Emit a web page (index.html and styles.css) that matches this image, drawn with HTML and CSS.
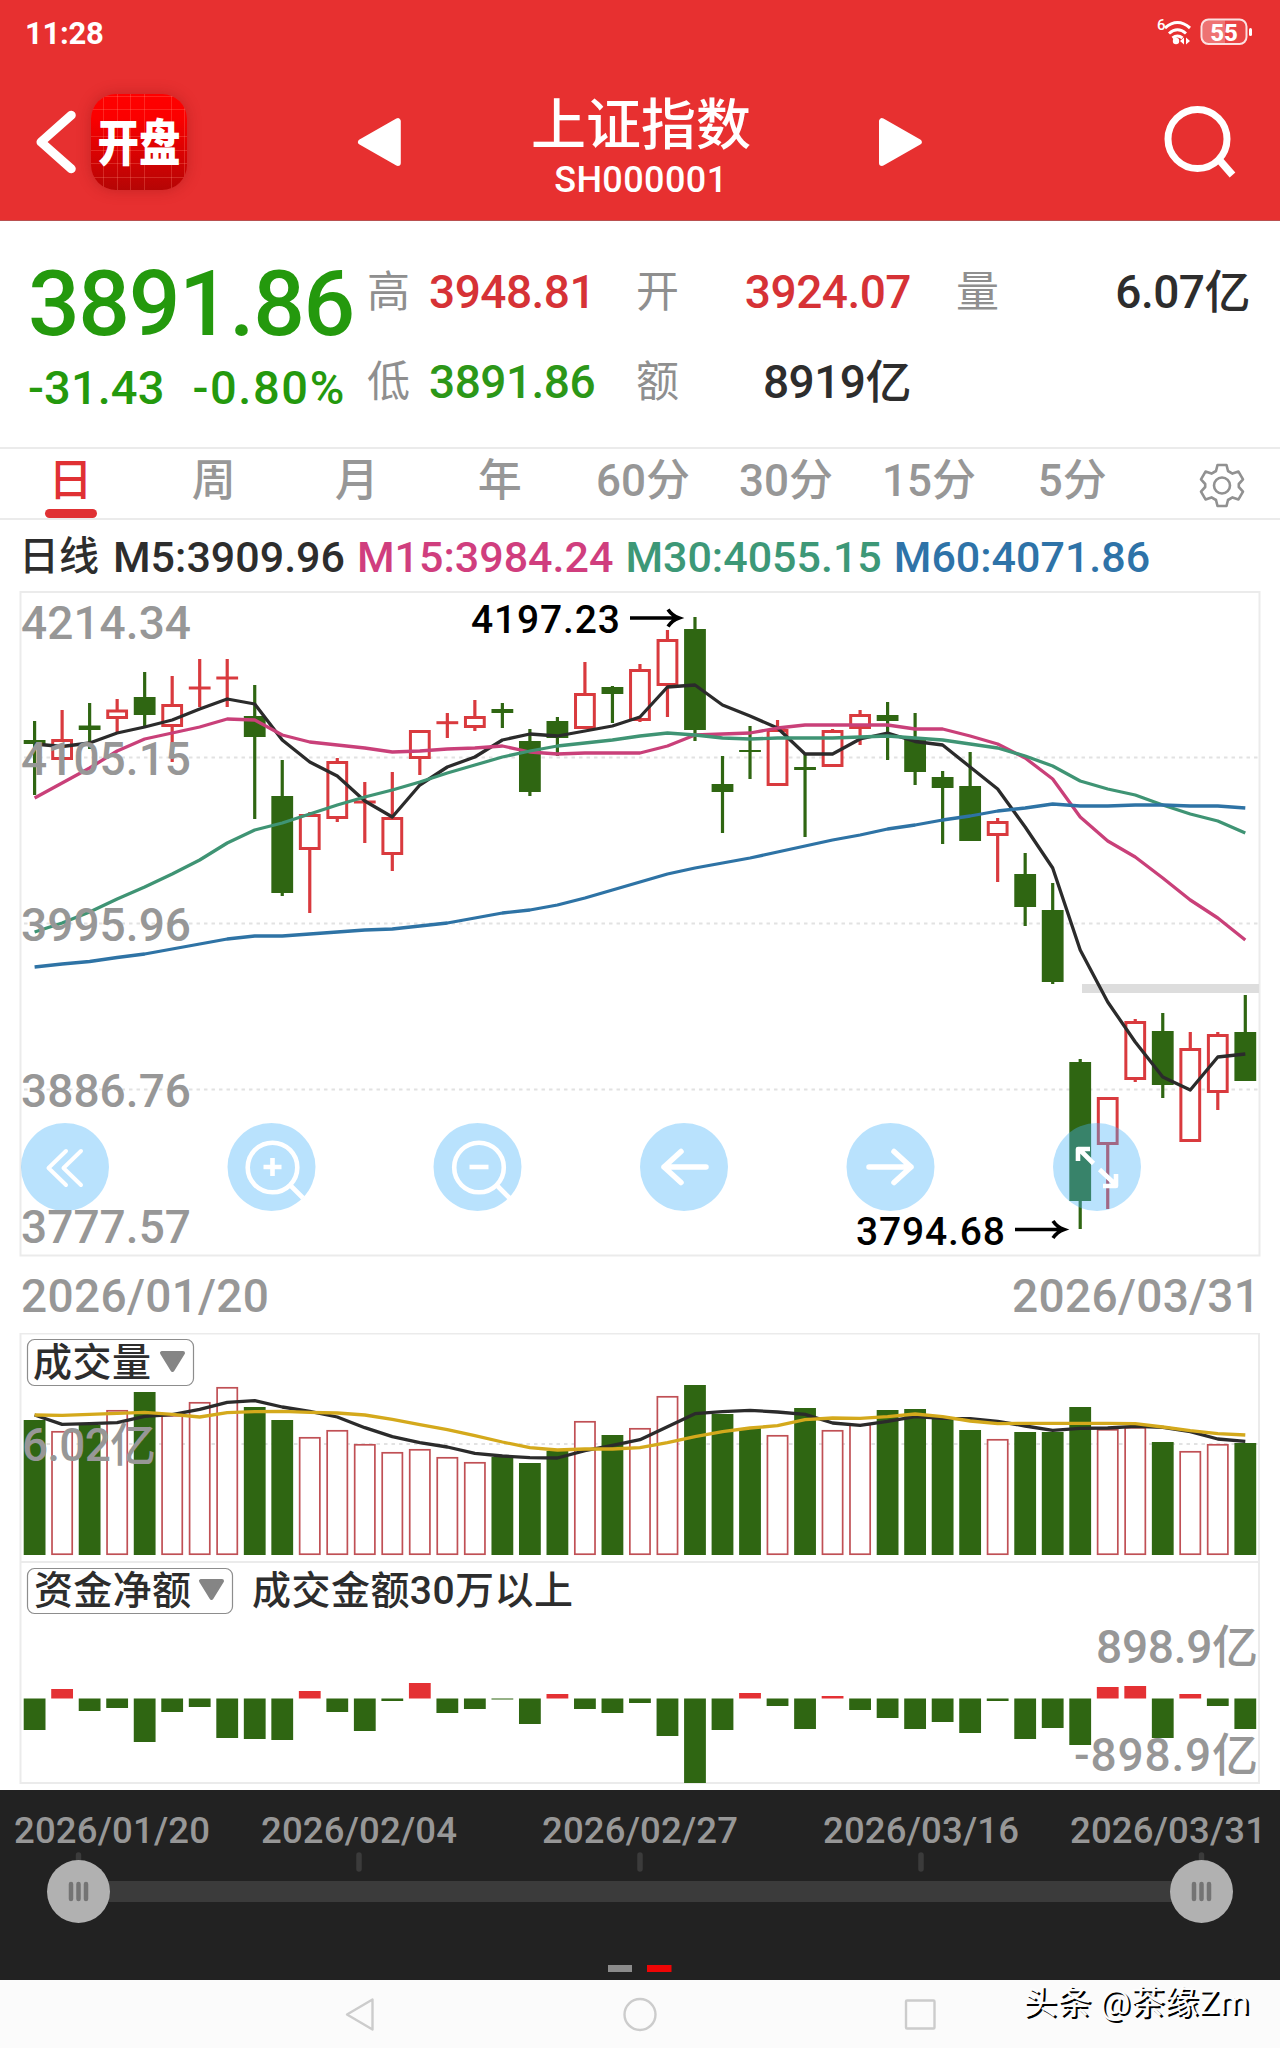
FILE: index.html
```html
<!DOCTYPE html>
<html lang="zh-CN">
<head>
<meta charset="utf-8">
<title>上证指数 SH000001</title>
<link rel="stylesheet" href="styles.css">
</head>
<body>
<header class="header">
  <div class="status">
    <span class="clock">11:28</span>
    <svg class="status-icons" width="100" height="40" viewBox="1154 12 100 40">
      <text x="1157" y="30" class="wifi-gen">6</text>
      <g fill="none" stroke="#fff" stroke-width="3">
        <path d="M1165 28q12.500-11 25 0M1169 33.500q8.500-7.500 17 0M1172.500 38q5-4 10 0"/>
      </g>
      <circle cx="1176" cy="41" r="3.200" fill="#fff"/>
      <path d="M1184 37.500v7l-4-3.500zM1186 37.500v7l4-3.500z" fill="#fff"/>
      <rect x="1201.500" y="19.500" width="45" height="24.500" rx="7" fill="#fff" fill-opacity=".1" stroke="#fff" stroke-opacity=".85" stroke-width="2"/>
      <path d="M1208 20.500h17v22.500h-17q-5.500 0-5.500-6v-10.500q0-6 5.500-6z" fill="#fff" fill-opacity=".25"/>
      <rect x="1249" y="28" width="3" height="8" rx="1.500" fill="#fff"/>
      <text x="1224" y="40.500" class="battery">55</text>
    </svg>
  </div>
  <div class="titlebar">
    <svg class="back" width="48" height="72" viewBox="0 0 48 72"><path d="M42 9L11.500 36 42 63" fill="none" stroke="#fff" stroke-width="9" stroke-linecap="round" stroke-linejoin="round" transform="translate(-1.500 0)"/></svg>
    <div class="logo">
      <svg width="96" height="96" viewBox="0 0 96 96"><text transform="translate(6.500 67) scale(.83 1)">开盘</text></svg>
    </div>
    <svg class="prev" width="46" height="52" viewBox="0 0 46 52"><path d="M42 5v42L5 26z" fill="#fff" stroke="#fff" stroke-width="6" stroke-linejoin="round"/></svg>
    <div class="title">
      <h1>上证指数</h1>
      <p>SH000001</p>
    </div>
    <svg class="next" width="46" height="52" viewBox="0 0 46 52"><path d="M4 5v42l37-21z" fill="#fff" stroke="#fff" stroke-width="6" stroke-linejoin="round"/></svg>
    <svg class="search" width="76" height="76" viewBox="0 0 76 76"><circle cx="34.500" cy="35" r="29.500" fill="none" stroke="#fff" stroke-width="7"/><path d="M55.500 55l14 16" stroke="#fff" stroke-width="7.500"/></svg>
  </div>
</header>

<section class="quote">
  <div class="price">
    <div class="last">3891.86</div>
    <div class="change"><span>-31.43</span><span class="percent">-0.80%</span></div>
  </div>
  <dl class="stats">
    <div class="stat"><dt>高</dt><dd class="up">3948.81</dd></div>
    <div class="stat wide"><dt>开</dt><dd class="up">3924.07</dd></div>
    <div class="stat wide"><dt>量</dt><dd>6.07亿</dd></div>
    <div class="stat"><dt>低</dt><dd class="down">3891.86</dd></div>
    <div class="stat wide"><dt>额</dt><dd>8919亿</dd></div>
  </dl>
</section>

<nav class="tabs">
  <a class="tab active">日</a><a class="tab">周</a><a class="tab">月</a><a class="tab">年</a>
  <a class="tab">60分</a><a class="tab">30分</a><a class="tab">15分</a><a class="tab">5分</a>
  <svg class="gear" width="48" height="48" viewBox="0 0 48 48" fill="none" stroke="#919191" stroke-width="2.600" stroke-linejoin="round">
    <path d="M19.500 4h9l1.500 6 4.500 2.600 6-2 4.500 7.800-4.200 4.600v3l4.200 4.600-4.500 7.800-6-2-4.500 2.600-1.500 6h-9l-1.500-6-4.500-2.600-6 2L3 30.600 7.200 26v-3L3 18.400l4.500-7.800 6 2L18 10z"/>
    <circle cx="24" cy="24.500" r="8"/>
  </svg>
</nav>

<div class="legend">
  <span class="period">日线</span><span>M5:3909.96</span><span class="m15">M15:3984.24</span><span class="m30">M30:4055.15</span><span class="m60">M60:4071.86</span>
</div>

<svg class="chart" width="1280" height="742" viewBox="0 591 1280 742">
  <rect class="frame" x="20.500" y="592" width="1239" height="663.500"/>
  <path class="grid" d="M24 757.500H1258M24 923.500H1258M24 1089.500H1258"/>
  <rect x="1082" y="984" width="177" height="9" fill="#ddd"/>
  <g id="candles"></g>
  <g id="averages"></g>

  <g class="control">
    <circle cx="65" cy="1167" r="44"/><circle cx="271.500" cy="1167" r="44"/><circle cx="477.500" cy="1167" r="44"/>
    <circle cx="684" cy="1167" r="44"/><circle cx="890.500" cy="1167" r="44"/><circle cx="1097" cy="1167" r="44"/>
  </g>
  <g class="glyph">
    <path d="M66 1151L48.500 1168l17.500 17M81 1151L63.500 1168l17.500 17" stroke-width="4"/>
    <circle cx="272.500" cy="1167.500" r="24.800"/><path d="M291 1186l12 12" stroke-linecap="butt"/><path d="M263.500 1167h18M272.500 1158v18" stroke-linecap="butt"/>
    <circle cx="479" cy="1167.500" r="24.800"/><path d="M497.500 1186l12 12" stroke-linecap="butt"/><path d="M469.500 1167h19" stroke-linecap="butt"/>
    <path d="M664 1167h42M681 1151.500l-17 15.500 17 15.500" stroke-width="5.500"/>
    <path d="M869 1167h42M894 1151.500l17 15.500-17 15.500" stroke-width="5.500"/>
    <path d="M1093.500 1163.500l-14.500-14.500M1090 1149h-12v12M1099.500 1169.500l16.500 15.500M1103 1186h13v-12" stroke-linecap="butt"/>
  </g>

  <g class="axis">
    <text x="21" y="639" textLength="170">4214.34</text>
    <text x="21" y="775" textLength="170">4105.15</text>
    <text x="21" y="941" textLength="170">3995.96</text>
    <text x="21" y="1107" textLength="170">3886.76</text>
    <text x="21" y="1243" textLength="170">3777.57</text>
    <text x="21" y="1312" textLength="248">2026/01/20</text>
    <text x="1012" y="1312" textLength="248">2026/03/31</text>
  </g>
  <g class="mark">
    <text x="471" y="633" textLength="149">4197.23</text>
    <text x="856" y="1245" textLength="149">3794.68</text>
    <path d="M630 618h48M668 609.500q4 6 11 8.500-7 2.500-11 8.500M1015 1229.500h48M1053 1221q4 6 11 8.500-7 2.500-11 8.500"/>
  </g>
</svg>

<svg class="chart" width="1280" height="228" viewBox="0 1333 1280 228">
  <path class="frame" d="M20.500 1561V1333.500H1259V1561"/>
  <path class="grid" d="M24 1444H1258"/>
  <g id="volume"></g>
  <rect class="select" x="27.500" y="1339.500" width="166" height="46" rx="7"/>
  <text class="pane" x="33" y="1376" textLength="118">成交量</text>
  <path class="caret" d="M162 1353h21l-10.500 17z"/>
  <text class="axis" x="22" y="1461" textLength="134">6.02亿</text>
</svg>

<svg class="chart" width="1280" height="229" viewBox="0 1561 1280 229">
  <rect class="frame" x="20.500" y="1562" width="1238.500" height="221"/>
  <g id="flow"></g>
  <rect class="select" x="27.500" y="1568.500" width="205" height="45" rx="7"/>
  <text class="pane" x="34" y="1604" textLength="157">资金净额</text>
  <path class="caret" d="M201 1581h21l-10.500 17z"/>
  <text class="pane" x="252" y="1604" textLength="321">成交金额30万以上</text>
  <text class="axis" x="1096" y="1663" textLength="162">898.9亿</text>
  <text class="axis" x="1074" y="1771" textLength="184">-898.9亿</text>
</svg>

<svg class="range" width="1280" height="190" viewBox="0 1790 1280 190">
  <g class="dates">
    <text x="14" y="1843" textLength="196">2026/01/20</text>
    <text x="261" y="1843" textLength="196">2026/02/04</text>
    <text x="542" y="1843" textLength="196">2026/02/27</text>
    <text x="823" y="1843" textLength="196">2026/03/16</text>
    <text x="1070" y="1843" textLength="196">2026/03/31</text>
  </g>
  <path d="M78.500 1855v14M359 1855v14M640 1855v14M921 1855v14M1201.500 1855v14" stroke="#3b3b3b" stroke-width="5.500" stroke-linecap="round"/>
  <rect x="78" y="1881" width="1124" height="21" fill="#3b3b3b"/>
  <circle cx="78.500" cy="1891.500" r="31.500" fill="#b1b1b1"/>
  <circle cx="1201.500" cy="1891.500" r="31.500" fill="#b1b1b1"/>
  <path d="M71 1884v15M78.500 1884v15M86 1884v15M1194 1884v15M1201.500 1884v15M1209 1884v15" stroke="#747474" stroke-width="4.500" stroke-linecap="round"/>
  <rect x="608" y="1965" width="24" height="7" fill="#8b8b8b"/>
  <rect x="647" y="1965" width="24.500" height="7" fill="#ee0505"/>
</svg>

<footer class="navbar">
  <svg width="1280" height="68" viewBox="0 1980 1280 68">
    <g fill="none" stroke="#ccc" stroke-width="2.400" stroke-linejoin="round">
      <path d="M372.500 1999.500v30L347 2014.500z"/>
      <circle cx="640" cy="2014.500" r="15.500"/>
      <rect x="906" y="2000.500" width="28.500" height="28" rx="1"/>
    </g>
    <text class="credit" x="1023" y="2014" textLength="226" lengthAdjust="spacingAndGlyphs">头条 @茶缘Zm</text>
  </svg>
</footer>
<script src="chart.js"></script>
</body>
</html>
```
FILE: styles.css
```css
* { box-sizing: border-box; margin: 0; padding: 0; }
body {
  width: 1280px;
  background: #fff;
  color: #2d2d2d;
  font-family: Roboto, "Noto Sans CJK SC", sans-serif;
  font-weight: 500;
}
svg { display: block; }
text { white-space: pre; }

.header { height: 221px; background: #e73030; color: #fff; border-bottom: 1px solid #b95050; }
.status { display: flex; justify-content: space-between; height: 64px; padding: 12px 26px 0 25px; }
.clock { font-size: 31px; line-height: 43px; font-weight: 700; letter-spacing: -.3px; }
.wifi-gen { font-size: 15px; fill: #fff; }
.battery { font-size: 24px; font-weight: 800; fill: #fff; text-anchor: middle; }
.titlebar { display: flex; align-items: center; height: 156px; padding: 0 41px 0 31px; }
.back { margin-right: 12px; }
.logo {
  width: 96px; height: 96px; border-radius: 25px;
  box-shadow: 0 0 14px rgba(150, 20, 20, .45);
  background:
    repeating-linear-gradient(90deg, transparent 0 12.500px, rgba(255, 140, 120, .28) 12.500px 13.500px),
    repeating-linear-gradient(0deg, transparent 0 12.500px, rgba(255, 140, 120, .28) 12.500px 13.500px),
    linear-gradient(#ff0000, #fb0000 25%, #b50505);
}
.logo text { font-size: 50px; font-weight: 900; fill: #fff; }
.logo svg { overflow: visible; }
.prev { margin-left: 169px; }
.title { width: 479px; text-align: center; padding: 13px 0 0 2px; }
.title h1 { font-size: 55px; line-height: 62px; font-weight: 500; }
.title p { font-size: 36px; line-height: 46px; margin-top: 1px; letter-spacing: .4px; }
.next { margin-right: 239px; }
.search { flex: none; }

.quote { display: flex; height: 228px; border-bottom: 2px solid #ebebeb; padding-left: 28px; }
.price { width: 339px; color: #24990d; }
.last { font-size: 91px; line-height: 108px; margin-top: 29px; letter-spacing: -1.400px; }
.change { display: flex; gap: 28px; font-size: 47px; line-height: 60px; letter-spacing: .1px; white-space: nowrap; }
.percent { letter-spacing: 1.600px; }
.stats { display: grid; grid-template-columns: 269px 275px 294px; column-gap: 0; grid-template-rows: 90px 90px; padding-top: 26px; }
.stats .stat:nth-child(3) { margin-left: 45px; width: 294px; }
.stat { display: flex; align-items: center; font-size: 45px; line-height: 60px; }
.stat dt { width: 62px; font-size: 43px; font-weight: 400; color: #8f8f8f; }
.stat dd { letter-spacing: -.5px; font-size: 46px; }
.wide { justify-content: space-between; }
.up { color: #d63236; }
.down { color: #2c9718; }

.tabs { display: flex; height: 71px; border-bottom: 2px solid #ebebeb; color: #979797; }
.tab { width: 143.100px; padding-right: 2px; font-size: 44px; line-height: 64px; text-align: center; }
.active { color: #e03134; }
.active::after { content: ""; display: block; width: 52px; height: 9px; margin: -4px auto 0; border-radius: 5px; background: #e03134; }
.gear { margin: 12px 0 0 53px; }

.legend { display: flex; height: 71px; padding: 7px 0 0 19px; font-size: 43px; line-height: 60px; gap: 12px; white-space: nowrap; }
.period { font-size: 40px; margin-right: 2px; }
.m15 { color: #d03e7e; }
.m30 { color: #3d9877; }
.m60 { color: #2e73a8; }

.frame { fill: none; stroke: #ebebeb; stroke-width: 2; }
.grid { fill: none; stroke: #e2e2e2; stroke-width: 1.800; stroke-dasharray: 3.500 4; }
.axis { font-size: 46px; fill: #979797; }
.mark text { font-size: 39px; fill: #000; }
.mark path { fill: none; stroke: #000; stroke-width: 3.600; }
.control { fill: rgba(71, 179, 250, .38); }
.glyph { fill: none; stroke: #fff; stroke-width: 4.600; stroke-linecap: round; stroke-linejoin: round; }
.select { fill: #fff; stroke: #8d8d8d; stroke-width: 1.200; }
.pane { font-size: 39px; fill: #2d2d2d; }
.caret { fill: #858585; stroke: #858585; stroke-width: 4; stroke-linejoin: round; }
.fall { fill: #2f6612; }
.rise { fill: #fff; stroke: #d93a3e; stroke-width: 3; }
.thin { fill: #fff; stroke: #c05055; stroke-width: 1.700; }
.inflow { fill: #e43134; }
.line { fill: none; stroke-width: 3.300; stroke-linejoin: round; }

.range { background: #222; }
.dates { font-size: 36.500px; fill: #979797; }
.navbar { height: 68px; background: #fbfbfb; }
.credit { font-size: 33px; font-weight: 400; fill: #fdfdfd; text-shadow: 2px 2px 0 #000; }
```
FILE: chart.js
```javascript
// Each session: [type, high, bodyTop, bodyBottom, low]; "g" falls, "r" rises.
const sessions = [
  ["g",721,740,744,795],["r",710,739,760,760],["g",703,725.5,730,749],["r",699,709.5,719,733],["g",672,697,715,727],
  ["r",676,704,727,762],["r",659,687,689,707],["r",659,677,679,707],["g",685,716,737,819],["g",760,796,893,896],
  ["r",812,814,850,913],["r",758,761,819,822],["r",782,801,803,843],["r",772,817,855,871],["r",730,730,759,775],
  ["r",713,721.7,723.7,738],["r",700,716,728,731],["g",703,709,713,728],["g",729,741,792,796],["g",717,721,738,756],
  ["r",662,693,729,729],["g",686,687,694,723],["r",664,669,721,722],["r",630,639,686,717],["g",617,629,730,741],
  ["g",756,784,792,833],["g",726,750,752,779],["r",720,729,786,786],["g",754,767,770,837],["r",729,730,767,767],
  ["r",710,714,729,745],["g",702,715,721,760],["g",713,738,772,785],["g",771,777,788,844],["g",752,786,841,841],
  ["r",818,821,836,882],["g",853,874,907,926],["g",883,910,982,984],["g",1059,1062,1201,1229],["r",1097,1097,1145,1209],
  ["r",1019,1021,1080,1082],["g",1013,1031,1085,1098],["r",1032,1048,1142,1142],["r",1032,1034,1093,1110],["g",995,1032,1081,1081]
];
const volumes = [1420,1432,1425,1411,1392,1416,1403,1388,1407,1420,1438,1431,1445,1453,1450,1458,1463,1457,1463,1451,1422,1435,1429,1397,1385,1414,1428,1436,1408,1431,1425,1410,1409,1419,1430,1440,1432,1432,1407,1430,1428,1442,1452,1445,1443];
const flows = [1730,1689,1711,1708,1742,1712,1707,1738,1739,1740,1691,1712,1731,1701,1683,1713,1709,1699.5,1724,1694,1709,1713,1703,1736,1783,1730,1693,1706,1729,1696,1710,1718,1729,1722,1733,1701,1739,1728,1745,1687,1686,1738,1694,1706,1729];
const m5 = [744,746.5,743,733,727,720,709,699,704,740,762,776,801,817,785,767,757,740,734,736,731,726,717,687,685,705,716,728,754,754,739,733,741.5,745,767,789,827,868,950,1002,1042,1077,1090,1057,1054];
const m15 = [798,783,768,751,739,733,727,719,720,735,742,745,748,752,751,749,748,746,752,754,753,753,753,746,735,734,733,728,725,725,725,725,729,729,736,744,758,779,817,841,857,878,900,918,940];
const m30 = [932,923,912,899,887,874,860,843,830,823,814,805,797,790,782,773,765,757,751,746,743,740,736,733,735,738,739,738,738,738,737,736,738,740,744,748,756,766,781,789,795,805,814,821,833];
const m60 = [967,964,961.5,957.5,954,949,944,939,936,936,934,932,930,929,926,923,918,913,910,905,898,890,882,874,868,863,858,852,846,840,835,829,825,820,816,811,808,804,806,806,805,805,806,806,808];
const volFast = [255,283,281,278,259,254,238,217,212,231,244,261,293,320,338,351,370,378,383,384,362,346,329,290,251,245,241,246,253,279,286,274,260,265,266,274,288,301,295,294,289,292,305,327,334];
const volSlow = [255,256,253,250,247,253,261,248,245,244,247,249,255,268,284,299,317,336,353,360,357,357,353,338,320,305,294,287,269,264,265,260,252,260,273,281,280,280,280,280,281,291,302,311,315];

const center = i => 34.6 + i * 27.516;
const rect = (cls, i, top, bottom, inset = 0) =>
  `<rect class="${cls}" x="${center(i) - 10.9 + inset}" y="${top + inset}" width="${21.8 - 2 * inset}" height="${Math.max(bottom - top - 2 * inset, .8)}"/>`;
const line = (values, color) =>
  `<polyline class="line" stroke="${color}" points="${values.map((v, i) => center(i) + "," + v).join(" ")}"/>`;
const draw = (id, markup) => { document.getElementById(id).innerHTML = markup; };

draw("candles", sessions.map(([type, high, top, bottom, low], i) => {
  const color = type === "g" ? "#2f6612" : "#d93a3e";
  const wick = `<path d="M${center(i)} ${high}V${low}" stroke="${color}" stroke-width="3.2"/>`;
  if (type === "g") return wick + rect("fall", i, top, bottom);
  if (bottom - top < 4) return wick + `<path d="M${center(i) - 10.9} ${(top + bottom) / 2}h21.8" stroke="${color}" stroke-width="3"/>`;
  return wick + rect("rise", i, top, bottom, 1.5);
}).join(""));
draw("averages", line(m5, "#2b2b2b") + line(m15, "#c94079") + line(m30, "#3f9474") + line(m60, "#2e73a5"));
draw("volume", volumes.map((top, i) => sessions[i][0] === "g"
  ? rect("fall", i, top, 1555) : rect("thin", i, top - 1, 1555, .8)).join("")
  + line(volFast.map(v => 1330 + v / 3), "#2b2b2b") + line(volSlow.map(v => 1330 + v / 3), "#d4a91c"));
draw("flow", flows.map((y, i) => y < 1698 ? rect("inflow", i, y, 1698.5) : rect("fall", i, 1698.5, y)).join(""));
```
